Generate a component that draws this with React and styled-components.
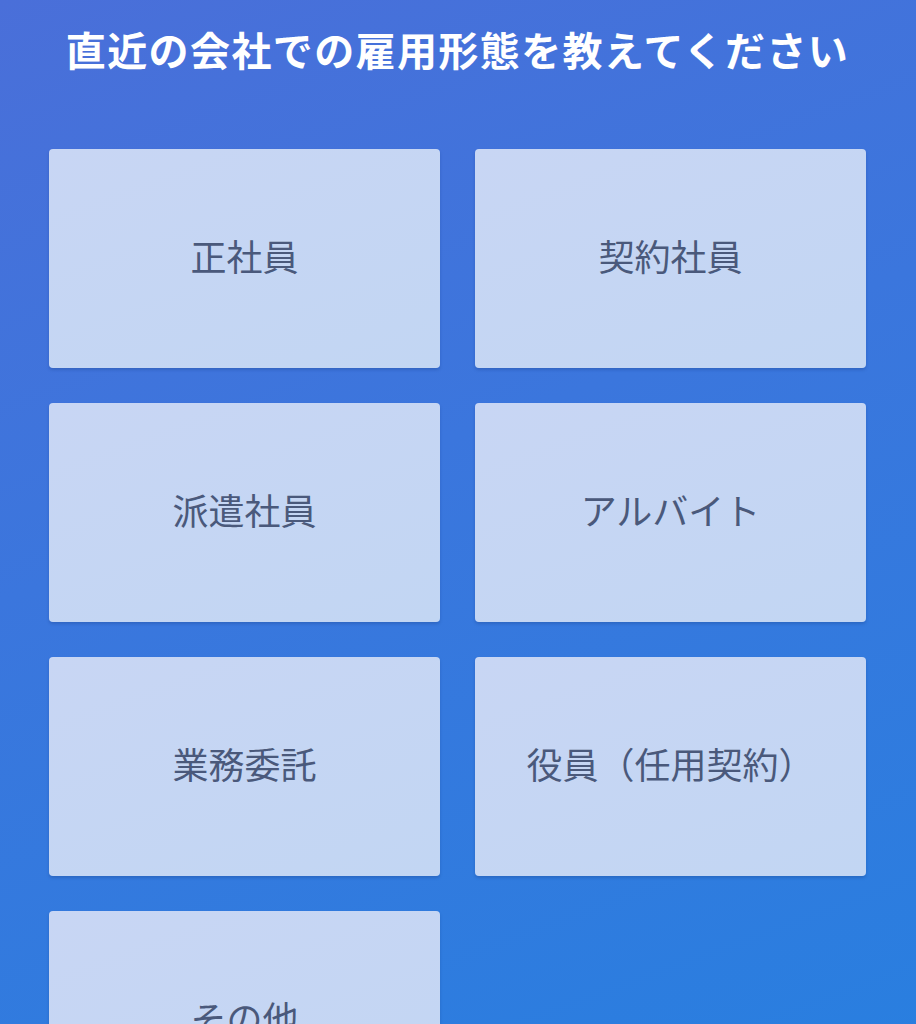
import React from 'react';
import styled, { createGlobalStyle } from 'styled-components';

const GlobalStyle = createGlobalStyle`
  html, body {
    margin: 0;
    padding: 0;
  }
  body {
    font-family: "Noto Sans CJK JP", "Noto Sans", sans-serif;
    background: #3a78de;
  }
`;

const Page = styled.main`
  min-height: 100vh;
  box-sizing: border-box;
  padding: 25px 50px 40px 49px;
  background: linear-gradient(160deg, #4a6fd9 0%, #3b76dd 40%, #2680e0 100%);
  overflow: hidden;
`;

const Title = styled.h1`
  margin: 0 0 76px;
  text-align: center;
  color: #ffffff;
  font-size: 40px;
  font-weight: 700;
  line-height: 48px;
  letter-spacing: 1.4px;
  white-space: nowrap;
`;

const Grid = styled.div`
  display: grid;
  grid-template-columns: repeat(2, 1fr);
  column-gap: 35px;
  row-gap: 35px;
`;

const Choice = styled.button`
  height: 219px;
  border: none;
  border-radius: 4px;
  background: linear-gradient(160deg, #c8d6f4 0%, #c2d6f3 100%);
  box-shadow: 0 2px 3px rgba(20, 50, 120, 0.25);
  color: #4a597b;
  font-family: inherit;
  font-size: 36px;
  font-weight: 400;
  display: flex;
  align-items: center;
  justify-content: center;
  cursor: pointer;
  padding: 0 0 7px;
`;

const options = [
  '正社員',
  '契約社員',
  '派遣社員',
  'アルバイト',
  '業務委託',
  '役員（任用契約）',
  'その他',
];

export default function App() {
  return (
    <>
      <GlobalStyle />
      <Page>
        <Title>直近の会社での雇用形態を教えてください</Title>
        <Grid>
          {options.map((o) => (
            <Choice key={o}>{o}</Choice>
          ))}
        </Grid>
      </Page>
    </>
  );
}
